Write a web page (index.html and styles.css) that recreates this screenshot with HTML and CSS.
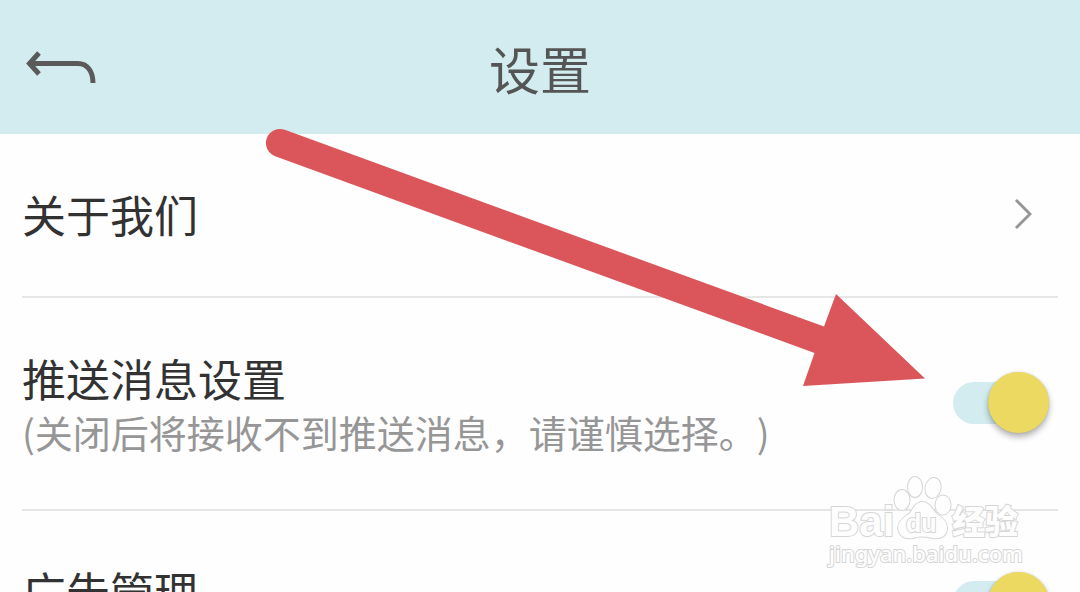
FILE: index.html
```html
<!DOCTYPE html>
<html lang="zh-CN">
<head>
<meta charset="utf-8">
<meta name="viewport" content="width=device-width, initial-scale=1">
<title>设置</title>
<link rel="stylesheet" href="styles.css">
</head>
<body>
<header class="topbar">
  <button class="back" type="button" aria-label="返回">
    <svg class="back-icon" viewBox="0 0 72 36" aria-hidden="true">
      <path d="M15 3 L5.500 13.500 L15 24 M6 13.500 H54 C63 13.500 69 21 69 33"/>
    </svg>
  </button>
  <h1 class="title">设置</h1>
</header>
<main class="settings">
  <a class="row" href="#about">
    <span class="label">关于我们</span>
    <svg class="chevron" viewBox="0 0 18 32" aria-hidden="true"><path d="M2 2 L16 16 L2 30"/></svg>
  </a>
  <div class="row">
    <label class="text" for="push">
      <span class="label">推送消息设置</span>
      <span class="hint">(关闭后将接收不到推送消息，请谨慎选择。)</span>
    </label>
    <input class="switch" id="push" type="checkbox" role="switch" checked>
  </div>
  <div class="row">
    <label class="text text-tall" for="ads"><span class="label">广告管理</span></label>
    <input class="switch" id="ads" type="checkbox" role="switch" checked>
  </div>
</main>
<svg class="pointer" viewBox="0 0 1080 592" aria-hidden="true">
  <path d="M284.800 129.800 L824 326.500 L836 294 L925 378.500 L803 386 L814.500 353 L275.200 156.200 A14 14 0 0 1 284.800 129.800 Z"/>
</svg>
<svg class="watermark" viewBox="0 0 204 104" role="img" aria-label="Baidu 经验">
  <g class="mark">
    <text class="mark-latin" x="6" y="62">Bai</text>
    <ellipse cx="79" cy="26" rx="7.500" ry="10"/>
    <ellipse cx="92" cy="13" rx="7" ry="10"/>
    <ellipse cx="110" cy="14" rx="7.500" ry="10" transform="rotate(12 110 14)"/>
    <ellipse cx="120" cy="31" rx="7.500" ry="9.500"/>
    <path d="M99 28 C92 28 90 36 86 40 C80 44 75 48 75 54 C76 63 83 65 90 64 C96 62 103 62 110 64 C118 65 124 62 124 54 C124 48 120 44 114 40 C109 36 107 28 99 28 Z"/>
    <text class="mark-du" x="83" y="58">du</text>
    <text class="mark-cjk" x="129" y="60">经验</text>
    <text class="mark-url" x="6" y="88">jingyan.baidu.com</text>
  </g>
</svg>
</body>
</html>
```
FILE: styles.css
```css
* { box-sizing: border-box; }

body {
  position: relative;
  height: 100vh;
  margin: 0;
  overflow: hidden;
  background: #fefefe;
  color: #323232;
  font-family: "Noto Sans CJK SC", sans-serif;
  text-spacing-trim: space-all;
}

.topbar {
  display: grid;
  grid-template-columns: 72px 1fr 72px;
  align-items: center;
  height: 134px;
  padding: 2px 24px 0;
  background: #d2ecef;
}

.back {
  display: flex;
  padding: 0;
  border: 0;
  background: none;
}

.back-icon { width: 72px; height: 36px; }

.back-icon path,
.chevron path {
  fill: none;
  stroke: #5a5a5a;
  stroke-width: 5;
}

.title {
  margin: 0;
  color: #555;
  font-size: 51px;
  font-weight: 400;
  line-height: 72px;
  text-align: center;
}

.settings { padding: 0 22px; }

.row {
  display: flex;
  align-items: center;
  justify-content: space-between;
  padding: 51px 9px 53px 0;
  border-bottom: 2px solid #e6e6e6;
  color: inherit;
  text-decoration: none;
}

.text { display: flex; flex-direction: column; }
.text-tall { min-height: 80px; }

.label { font-size: 44px; line-height: 58px; }

.hint {
  color: #969696;
  font-size: 38px;
  line-height: 49px;
}

.chevron { width: 18px; height: 32px; margin-right: 17px; }
.chevron path { stroke: #969696; stroke-width: 3; }

.switch {
  display: grid;
  flex: none;
  align-items: center;
  width: 96px;
  height: 62px;
  margin: 0;
  appearance: none;
}

.switch::before,
.switch::after {
  content: "";
  grid-area: 1 / 1;
}

.switch::before {
  width: 84px;
  height: 42px;
  border-radius: 21px;
  background: #d2ecef;
}

.switch::after {
  justify-self: end;
  width: 61px;
  height: 61px;
  border-radius: 50%;
  background: #ebd962;
  box-shadow: 0 4px 6px rgb(0 0 0 / 30%), 0 0 2px rgb(0 0 0 / 15%);
}

.pointer {
  position: absolute;
  top: 0;
  left: 0;
  width: 100%;
  fill: #db565b;
  pointer-events: none;
}

.watermark {
  position: absolute;
  right: 53px;
  bottom: 14px;
  width: 204px;
  height: 104px;
  pointer-events: none;
}

.mark {
  fill: #fefefe;
  stroke: #d6d6d6;
  stroke-width: 2;
  paint-order: stroke;
}

.mark-latin { font: 700 42px "Liberation Sans", sans-serif; }
.mark-du { font: 700 25px "Liberation Sans", sans-serif; }
.mark-cjk { font: 900 33px "Noto Sans CJK SC", sans-serif; }
.mark-url { font: 500 22px "Noto Sans", sans-serif; }
```
